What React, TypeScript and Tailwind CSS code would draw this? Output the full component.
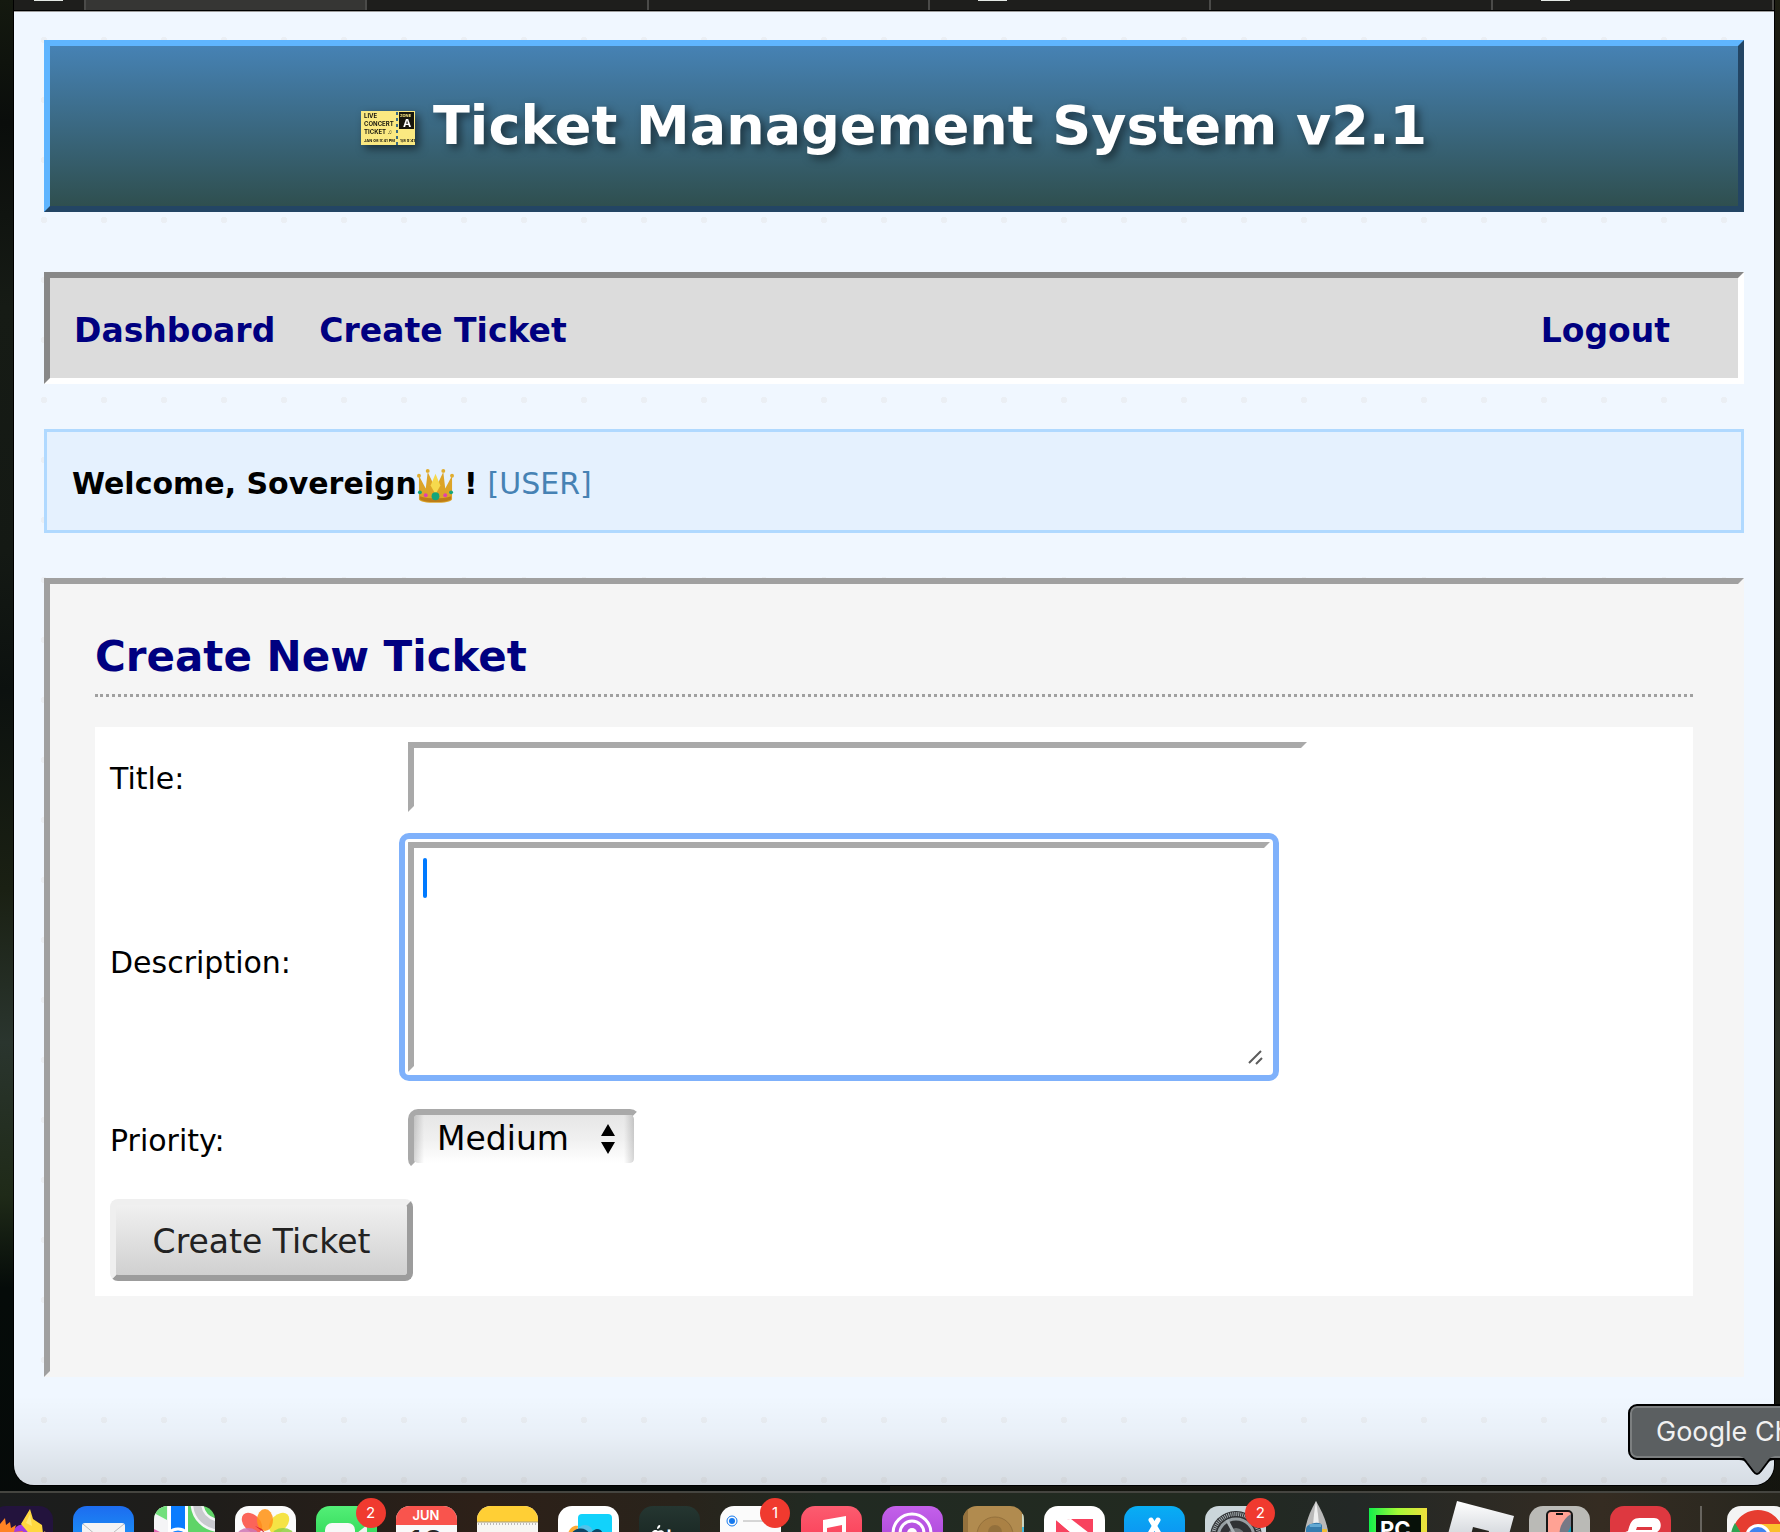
import React from "react";

const badge =
  "absolute -top-2 left-10 z-10 flex h-[30px] w-[30px] items-center justify-center rounded-full bg-[#f03a2f] font-['Inter',sans-serif] text-[15px] text-white";

const DockIcon = ({ bg, count, children }: any) => {
  return (
    <div className="relative h-[61px] w-[61px] shrink-0">
      <svg viewBox="0 0 61 61" className={`block h-[61px] w-[61px] overflow-hidden rounded-[14px] ${bg}`}>
        {children}
      </svg>
      {count ? <span className={badge}>{count}</span> : null}
    </div>
  );
};

const Dock = () => {
  return (
    <footer className="h-[42px] overflow-hidden border-t-2 border-[#454540] bg-[linear-gradient(90deg,#1b1d1d_0%,#1f1d1a_12%,#2d2018_27%,#29231b_38%,#212a22_46%,#222a20_68%,#232826_76%,#352c22_90%,#28271f_100%)]">
      <div className="-mx-2 flex pt-[13px]">
        <div className="flex min-w-0 flex-1 justify-between">
          <DockIcon bg="bg-[#23133d]">
            <path d="M20 28c4-12 14-12 17-2l3 20H18Z" fill="#a43be0" />
            <path d="M0 22 8 18 13 12 14 19 18 16 19 22 24 19 22 26 31 25 26 34 28 61H0Z" fill="#ff8424" />
            <path d="M29 18 38 3l3 10 9 6 1 8 2-2 3 14-6 20-10-28Z" fill="#ffd83f" />
            <path d="M34 17 38 8l2 12Z" fill="#ffe873" />
          </DockIcon>
          <DockIcon bg="bg-[linear-gradient(#1d6cf0,#19b0fa)]">
            <rect x="9" y="17" width="43" height="30" rx="3" fill="#f4f4f4" />
            <path d="m10 18 20 17 21-17M10 46l15-15M51 46 36 31" fill="none" stroke="#b9bbbd" strokeWidth="1" />
          </DockIcon>
          <DockIcon bg="bg-[#5fd468]">
            <path d="M0 0h16v61H0Z" fill="#f4f4f6" />
            <path d="M0 7 13 14V0H0Z" fill="#72df7c" />
            <path d="M14 0h20v61H14Z" fill="#fff" />
            <path d="M17 0h14v61H17Z" fill="#0a7cff" />
            <path d="M43-2c1 13 10 20 22 22" fill="none" stroke="#f5f5f7" strokeWidth="13" />
            <path d="M43-2c1 13 10 20 22 22" fill="none" stroke="#c9cacf" strokeWidth="8" />
            <circle cx="24" cy="36" r="13" fill="#1a86ff" stroke="#fff" strokeWidth="3" />
            <path d="M0 23 12 29 0 40Z" fill="#e36bb5" />
          </DockIcon>
          <DockIcon bg="bg-[#fbfbfb]">
            <g fillOpacity=".88">
              <ellipse cx="17" cy="17" rx="8" ry="12" transform="rotate(-45 17 17)" fill="#fb4e42" />
              <ellipse cx="44" cy="17" rx="8" ry="12" transform="rotate(45 44 17)" fill="#f4df2b" />
              <ellipse cx="30" cy="14" rx="8" ry="11" fill="#ff9418" />
              <ellipse cx="13" cy="30" rx="11" ry="8" fill="#cf78b5" />
              <ellipse cx="48" cy="30" rx="11" ry="8" fill="#93cf46" />
              <path d="m31 28-11-8 7 3Z" fill="#d71d20" />
            </g>
          </DockIcon>
          <DockIcon bg="bg-[linear-gradient(#53ef77,#17c641)]" count={2}>
            <rect x="9" y="17" width="30" height="27" rx="7" fill="#f8f8f8" />
            <path d="m41 27 10-8v24l-10-8Z" fill="#f0f5f1" />
          </DockIcon>
          <DockIcon bg="bg-[#fafafa]">
            <path d="M0 0h61v19H0Z" fill="#f9544d" />
            <text x="30" y="14" textAnchor="middle" fontFamily="Inter" fontWeight="600" fontSize="13" fill="#fff">JUN</text>
            <text x="30" y="50" textAnchor="middle" fontFamily="Inter" fontSize="36" fill="#282828">18</text>
          </DockIcon>
          <DockIcon bg="bg-[#f7f6f3]">
            <path d="M0 0h61v16H0Z" fill="#ffcf35" />
            <path d="M0 16h61" stroke="#a99c76" />
            <path d="M1 18h60" stroke="#b9b9b9" strokeWidth="2" strokeDasharray="1 2" />
          </DockIcon>
          <DockIcon bg="bg-white">
            <rect x="20" y="8" width="34" height="40" rx="4" fill="#12d2fb" />
            <path d="M8 34c2-10 6-15 12-14l-2 14Z" fill="#ffab33" />
            <circle cx="27" cy="27" r="8" fill="#52c3ea" />
            <path d="M13 32c4-9 13-10 17-3 3 4 5-4 9-4 3 0 4 3 4 6" fill="none" stroke="#0c4565" strokeWidth="4" />
          </DockIcon>
          <DockIcon bg="bg-[linear-gradient(#253631,#111c19)]">
            <path d="M21 19c1 2-1 4-3 4 0-2 1-4 3-4Zm-8 7c2-3 5-2 6-1 2-1 5-1 6 1-4 2-4 8 0 10-4 8-6 5-8 5-3 1-9-9-4-15Z" fill="#fff" />
            <text x="27" y="37" fontFamily="Inter" fontWeight="600" fontSize="20" fill="#fff">tv</text>
          </DockIcon>
          <DockIcon bg="bg-[#fbfbfb]" count={1}>
            <circle cx="12" cy="15" r="5" fill="none" stroke="#1579ee" strokeWidth="1" />
            <circle cx="12" cy="15" r="3" fill="#1579ee" />
            <path d="M23 15h30" stroke="#b0b0b0" />
            <circle cx="12" cy="30" r="4" fill="#ed4338" />
          </DockIcon>
          <DockIcon bg="bg-[linear-gradient(#fc5c70,#fa2d48)]">
            <path d="M22 14 45 10v33h-4V19l-15 3v24h-4Z" fill="#fff" />
            <circle cx="21" cy="45" r="6" fill="#fff" />
          </DockIcon>
          <DockIcon bg="bg-[linear-gradient(#c460ea,#9c3ad0)]">
            <g fill="none" stroke="#fff" strokeWidth="3">
              <circle cx="30" cy="27" r="19" />
              <circle cx="30" cy="27" r="12" />
            </g>
            <circle cx="30" cy="27" r="5" fill="#fff" />
          </DockIcon>
          <DockIcon bg="bg-[#b18b4f]">
            <path d="M0 0h5v61H0Z" fill="#94713d" />
            <circle cx="32" cy="29" r="18" fill="#aa8145" stroke="#93703c" />
            <circle cx="32" cy="26" r="7" fill="#93703c" />
            <path d="M59 8h2v13h-2Z" fill="#c9d4c2" />
            <path d="M59 21h2v20h-2Z" fill="#42b7dc" />
          </DockIcon>
          <DockIcon bg="bg-white">
            <path d="M12 14V30L33 46H48ZM23 13h26v21Z" fill="#f8425e" />
            <path d="M12 14 49 42V30L27 13Z" fill="#fff" />
            <path d="M12 15 42 39H29L12 26Z" fill="#f8425e" />
          </DockIcon>
          <DockIcon bg="bg-[linear-gradient(#08aef4,#107cf0)]">
            <path d="m27 14 17 29M34 14 17 43M14 35h18M38 35h10" stroke="#fff" strokeWidth="5" strokeLinecap="round" />
          </DockIcon>
          <DockIcon bg="bg-[#cbd6da]" count={2}>
            <circle cx="31" cy="31" r="26" fill="#303234" />
            <circle cx="31" cy="31" r="23" fill="none" stroke="#a8b0b4" strokeWidth="4" strokeDasharray="1 1" />
            <circle cx="31" cy="31" r="18" fill="none" stroke="#969ea2" strokeWidth="3" />
            <circle cx="31" cy="31" r="9" fill="#6f7577" />
            <path d="m31 31-9-17M31 31h20M31 31 20 48" stroke="#a8b0b4" strokeWidth="3" />
          </DockIcon>
          <div className="-mt-[5px] w-[61px] shrink-0">
            <svg viewBox="0 0 61 66" className="block h-[66px] w-[61px]">
              <path d="M30 0c7 12 12 23 13 38v28H18V38C19 23 23 12 30 0Z" fill="#b9b9b9" />
              <path d="M30 0c2 12 3 20 3 30h-6c0-10 1-18 3-30Z" fill="#eeeeee" />
              <path d="M20 28c0-6 16-9 16-3v7H20Z" fill="#357cae" />
              <path d="M23 23h12v3H24Z" fill="#62a8d2" />
              <path d="M36 28h5v6h-5Z" fill="#f1bf35" />
            </svg>
          </div>
          <div className="w-[61px] shrink-0">
            <svg viewBox="0 0 61 61" className="block h-[61px] w-[61px]">
              <defs>
                <linearGradient id="pcEdge">
                  <stop offset="0" stopColor="#12ef4b" />
                  <stop offset=".5" stopColor="#a4fb36" />
                  <stop offset="1" stopColor="#f0df3d" />
                </linearGradient>
              </defs>
              <path d="M2 2h58v58H2Z" fill="url(#pcEdge)" />
              <path d="M9 9h45v45H9Z" fill="#071109" />
              <text x="13" y="31" fontFamily="Inter" fontWeight="700" fontSize="22" fill="#fff">PC</text>
            </svg>
          </div>
          <div className="-mt-[5px] -mr-[5px] w-[66px] shrink-0">
            <svg viewBox="0 0 66 66" className="block h-[66px] w-[66px]">
              <defs>
                <linearGradient id="rbx" x2="0" y2="1">
                  <stop offset="0" stopColor="#ffffff" />
                  <stop offset="1" stopColor="#a9b0ba" />
                </linearGradient>
              </defs>
              <path d="m9 0 57 15-15 55-57-15Z" fill="url(#rbx)" />
              <path d="m25 26 16 4-4 16-16-4Z" fill="#27251f" />
            </svg>
          </div>
          <DockIcon bg="bg-[#babab6]">
            <rect x="18" y="5" width="25" height="54" rx="4" fill="#ffa294" stroke="#171717" strokeWidth="2" />
            <path d="M42 8v32H33c-6-13-1-26 9-32Z" fill="#777986" />
            <path d="M34 36 42 20v22H31Z" fill="#12a2bd" />
            <path d="M27 7h7v2h-7Z" fill="#111" />
          </DockIcon>
          <DockIcon bg="bg-[#de3840]">
            <path d="M18 25c3-12 6-13 14-13h12c9 0 9 14 0 15H32l-5 5H10v-4Z" fill="#fff" />
            <path d="M27 21h15v3H26Z" fill="#de3840" />
          </DockIcon>
        </div>
        <div className="mr-[25px] ml-[29px] h-[61px] w-[2px] bg-[#67645e]" />
        <DockIcon bg="bg-[#f4f4f4]">
          <circle cx="31" cy="31" r="26" fill="#fbc02c" />
          <path d="M8 18a26 26 0 0 1 46 0H31L20 37Z" fill="#e63d30" />
          <path d="M8 17a26 26 0 0 0 20 40L20 37Z" fill="#2da350" />
          <circle cx="31" cy="31" r="13" fill="#fff" />
          <circle cx="31" cy="31" r="10" fill="#3f83f0" />
        </DockIcon>
      </div>
    </footer>
  );
};

const TabStrip = () => {
  return (
    <div className="flex h-3 border-b border-[#9c9c9c] bg-[#1e1e1c] shadow-[inset_0_-1px_0_#000]">
      <div className="w-[70px] shrink-0">
        <div className="ml-5 h-px w-[29px] bg-[#e4e8e4]" />
      </div>
      <div className="mb-px flex-1 border-l-2 border-[#4b4b49] bg-[#363634]" />
      <div className="mb-px flex-1 border-l-2 border-[#4b4b49]" />
      <div className="mb-px flex-1 border-l-2 border-[#4b4b49]" />
      <div className="mb-px flex-1 border-l-2 border-[#4b4b49]">
        <div className="ml-12 h-px w-[29px] bg-[#e4e8e4]" />
      </div>
      <div className="mb-px flex-1 border-l-2 border-[#4b4b49]" />
      <div className="mb-px flex-1 border-x-2 border-[#4b4b49]">
        <div className="ml-12 h-px w-[29px] bg-[#e4e8e4]" />
      </div>
    </div>
  );
};

const TicketForm = () => {
  return (
    <form className="mt-[30px] bg-white p-[15px]">
      <div className="grid grid-cols-[298px_1fr] items-center gap-y-[30px] text-[30px] leading-[36px] text-black">
        <label htmlFor="title" className="pt-1">
          Title:
        </label>
        <input
          id="title"
          type="text"
          className="h-[70px] w-[899px] max-w-full border-6 border-t-[#a9a9a9] border-r-white border-b-white border-l-[#a9a9a9] px-2 outline-none"
        />
        <label htmlFor="description" className="pt-1">
          Description:
        </label>
        <div className="relative w-[862px] max-w-full pb-[7px]">
          <textarea
            id="description"
            className="block h-[230px] w-full resize-none rounded-[1px] border-6 border-t-[#a9a9a9] border-r-white border-b-white border-l-[#a9a9a9] px-2 py-2 outline-6 outline-offset-3 outline-[#7fb1fb]"
          />
          <span className="absolute top-4 left-[15px] h-10 w-[4px] rounded-full bg-[#007aff]" />
          <svg viewBox="0 0 15 15" className="absolute right-[7px] bottom-[14px] h-[15px] w-[15px]">
            <path d="M1 13 13 1M8 14l6-6" stroke="#5c5c5c" strokeWidth="2" />
          </svg>
        </div>
        <label htmlFor="priority" className="pt-1">
          Priority:
        </label>
        <div className="relative w-[232px]">
          <select
            id="priority"
            defaultValue="Medium"
            className="block h-[60px] w-full appearance-none rounded-[10px] border-6 border-t-[#a9a9a9] border-r-white border-b-white border-l-[#a9a9a9] bg-[linear-gradient(90deg,#00000028,transparent_10px,transparent_210px,#00000028),linear-gradient(#e6e6e6,#f0f0f0_50%,#fff)] bg-clip-padding pl-[23px] text-[33px] leading-[40px] outline-none"
          >
            <option>Low</option>
            <option>Medium</option>
            <option>High</option>
          </select>
          <svg viewBox="0 0 16 30" className="pointer-events-none absolute top-[15px] right-6 h-[30px] w-4">
            <path d="M8 0 15 12H1ZM8 30 1 18h14Z" fill="#000" />
          </svg>
        </div>
      </div>
      <button
        type="button"
        className="mt-[30px] block h-[82px] w-[303px] rounded-[8px] border-6 border-t-[#efefef] border-r-[#9c9c9c] border-b-[#9c9c9c] border-l-[#efefef] bg-[linear-gradient(#f0f0f0,#d0d0d0)] pt-1 text-[33px] leading-[40px] text-[#222]"
      >
        Create Ticket
      </button>
    </form>
  );
};

const App = () => {
  return (
    <div className="flex min-h-screen flex-col overflow-hidden bg-[linear-gradient(90deg,transparent_50%,#2a251866_50%),linear-gradient(#14190f,#0a0d0b_8%,#161b15_20%,#141914_36%,#0c110f_45%,#1a2013_58%,#2a352e_68%,#1f2a18_78%,#050b09_84%,#060a09)] font-['DejaVu_Sans',Verdana,sans-serif]">
      <div className="relative mb-[6px] flex flex-1 flex-col pr-[6px] pl-[14px]">
        <div className="flex flex-1 flex-col overflow-hidden rounded-b-[20px] bg-[#f0f7ff] shadow-[0_0_0_1px_#000]">
          <TabStrip />
          <main className="flex-1 bg-[linear-gradient(transparent_calc(100%-90px),#00000008_calc(100%-50px),#0000001c),radial-gradient(circle_at_30px_28px,#ebeff4_3px,transparent_3px)] bg-size-[100%_100%,60px_60px] px-[30px] pt-7">
            <header className="flex h-[172px] items-center justify-center border-6 border-t-[#5fb5ff] border-r-[#234564] border-b-[#234564] border-l-[#5fb5ff] bg-[linear-gradient(#4682b4,#2f4f4f)] text-white">
              <svg viewBox="0 0 54 34" className="mt-1 mr-[18px] h-[34px] w-[54px] drop-shadow-[4px_4px_4px_#00000080]">
                <path d="M0 0h54v34H0Z" fill="#fbe981" />
                <path d="M38 1h15v17H38Z" fill="#17160d" />
                <path d="M36 1v33" stroke="#3b6a80" strokeWidth="2" strokeDasharray="3 3" />
                <g fontFamily="Inter" fontWeight="700" fontSize="6" fill="#17160d">
                  <text x="3" y="7">LIVE</text>
                  <text x="3" y="15">CONCERT</text>
                  <text x="3" y="23">TICKET ♫</text>
                  <text x="3" y="31" fontSize="4">JAN 08 9:41 PM</text>
                  <text x="39" y="31" fontSize="4">1/8 9:41</text>
                  <text x="39" y="6" fontSize="4" fill="#fbe981">ZONE</text>
                  <text x="42" y="16" fontSize="11" fill="#fff">A</text>
                </g>
              </svg>
              <h1 className="text-[54px] leading-[64px] font-bold [text-shadow:4px_4px_8px_#00000080]">
                Ticket Management System v2.1
              </h1>
            </header>

            <nav className="mt-[60px] flex h-[112px] items-center border-6 border-t-[#888] border-r-white border-b-white border-l-[#888] bg-[#dcdcdc] pt-[6px] pr-[68px] pl-6 text-[33px] leading-[40px] font-bold text-[#000080]">
              <a href="#dashboard">Dashboard</a>
              <a href="#create" className="ml-11">
                Create Ticket
              </a>
              <a href="#logout" className="ml-auto">
                Logout
              </a>
            </nav>

            <section className="mt-[45px] flex h-[104px] items-center border-3 border-[#b0d9ff] bg-[#e5f1fe] px-[25px] pt-[6px] text-[30px] leading-[36px] text-black">
              <strong>Welcome, Sovereign</strong>
              <svg viewBox="0 0 38 38" className="mt-1 h-[37px] w-[37px]">
                <path d="M2 8 9 21 11 4l8 17 8-17 2 17 7-13v24c0 5-34 5-34 0Z" fill="#dca428" />
                <path d="m14 18 5-12 5 12-5 9Z" fill="#f6d94d" />
                <path d="M3 29c8 3 24 3 32 0v3c-5 4-27 4-32 0Z" fill="#bd7c16" />
                <circle cx="19" cy="29" r="4" fill="#14a57a" />
                <circle cx="9" cy="28" r="2" fill="#e23fae" />
                <circle cx="29" cy="28" r="2" fill="#e23fae" />
                <circle cx="3" cy="25" r="2" fill="#14a57a" />
                <circle cx="35" cy="25" r="2" fill="#14a57a" />
                <g fill="#e0ad2f">
                  <circle cx="2" cy="8" r="2" />
                  <circle cx="11" cy="3" r="2" />
                  <circle cx="27" cy="3" r="2" />
                  <circle cx="36" cy="8" r="2" />
                </g>
              </svg>
              <strong className="ml-[10px]">!</strong>
              <span className="ml-[10px] text-[#4682b4]">[USER]</span>
            </section>

            <section className="mt-[45px] mb-[108px] border-6 border-t-[#a0a0a0] border-r-[#f5f5f5] border-b-[#f5f5f5] border-l-[#a0a0a0] bg-[#f5f5f5] px-[45px] pt-12 pb-[75px]">
              <h2 className="border-b-3 border-dotted border-[#a0a0a0] pb-3 text-[42px] leading-[50px] font-bold text-[#000080]">
                Create New Ticket
              </h2>
              <TicketForm />
            </section>
          </main>
        </div>

        {/* dock hover label */}
        <div className="absolute -right-[102px] bottom-[25px] flex h-[56px] w-[254px] items-center rounded-[9px] border-2 border-black bg-[#5b5f61] pl-[26px] font-['Inter',sans-serif] text-[27px] leading-[32px] whitespace-nowrap text-[#f1f1f1] shadow-[inset_0_0_0_2px_#7c7f80]">
          Google Chrome
          <svg viewBox="0 0 36 20" className="absolute top-[50px] left-[109px] h-5 w-9">
            <path d="M0 0c5 1 6 3 8 6l6 9c3 4 5 4 8 0l6-9c2-3 3-5 8-6Z" fill="#5b5f61" />
            <path d="M0 3c5 0 6 1 8 4l6 8c3 4 5 4 8 0l6-8c2-3 3-4 8-4" fill="none" stroke="#000" strokeWidth="2" />
          </svg>
        </div>
      </div>
      <Dock />
    </div>
  );
};

export default App;
